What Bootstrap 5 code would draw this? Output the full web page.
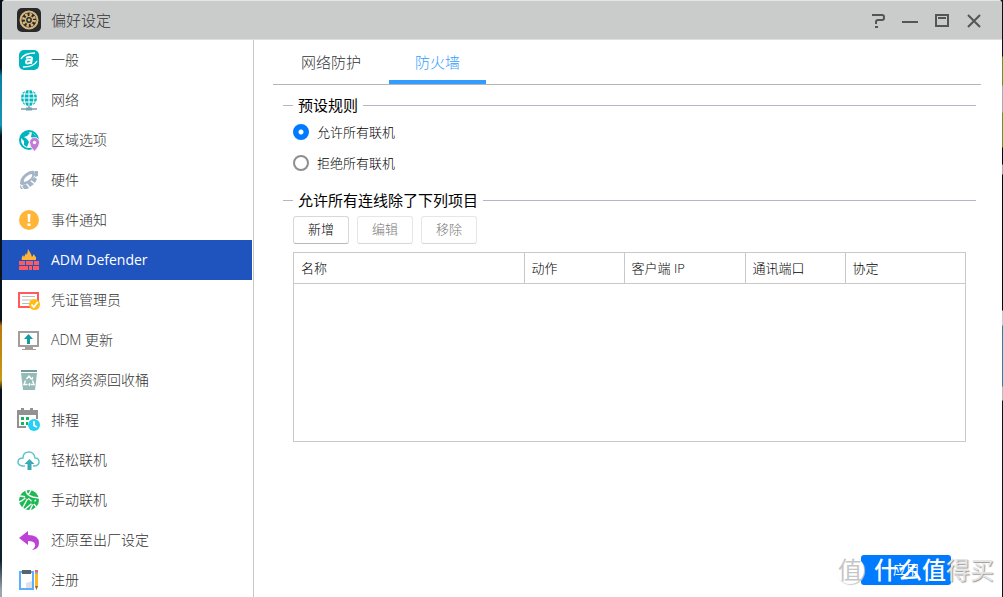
<!DOCTYPE html>
<html lang="zh-CN">
<head>
<meta charset="utf-8">
<meta name="viewport" content="width=device-width, initial-scale=1">
<title>偏好设定</title>
<link href="https://cdn.jsdelivr.net/npm/bootstrap@5.3.0/dist/css/bootstrap.min.css" rel="stylesheet">
<style>
  body {
    font-family: "Open Sans", "Noto Sans CJK SC", sans-serif;
    font-size: 14px;
    font-weight: 300;
    line-height: 20px;
    color: #222;
    background: #07121d;
  }
  .desktop {
    padding: 0 1px 0 2px;
    background:
      linear-gradient(#07121d 68px, #0d7ea0 76px, #1397b8 125px, #07121d 136px, #07121d 320px, #b87912 326px, #c89a10 380px, #07121d 390px, #0d2030 560px, #9aa5ad 590px) left / 2px 100% no-repeat,
      linear-gradient(#07121d 56px, #5c9a12 57px 85px, #aaa 86px 112px, #5c9a12 113px 147px, #050a0e 148px 164px, #aaa 165px 174px, #050a0e 175px 310px, #ccc 311px 325px, #1b8ba5 326px 386px, #bbb 387px 400px, #0b151d 401px) right / 1px 100% no-repeat,
      #07121d;
  }
  .app-window { border-radius: 4px 4px 0 0; background: #fff; }
  .titlebar {
    height: 40px;
    padding: 0 18px 0 14px;
    gap: 9px;
    background: #cacbcb;
    border-top: 1px solid #e4e5e5;
    border-bottom: 1px solid #e0e0e0;
    font-size: 15px;
    color: #333;
  }
  .titlebar button { width: 20px; height: 20px; color: #555; }
  .sidebar { width: 252px; padding-right: 1px; border-right: 1px solid #c8c8c8; }
  .sidebar a {
    height: 40px;
    padding-left: 14px;
    gap: 9px;
    color: #333;
    text-decoration: none;
  }
  .sidebar a.active { background: #1f54bf; color: #fff; font-weight: 400; }
  .sidebar svg, .titlebar svg { flex: none; }
  .content { padding: 0 21px 0 19px; color: #000; }
  .tabs { gap: 2px; padding-left: 2px; border-bottom: 1px solid #b5b5b7; }
  .tabs .nav-link {
    height: 44px;
    padding: 4px 26px 0;
    border: 0;
    border-bottom: 4px solid transparent;
    border-radius: 0;
    background: transparent;
    font-size: 15px;
    color: #333;
  }
  .tabs .nav-link.active { color: #339cff; border-color: #339cff; }
  .panel { padding: 10px 5px 12px 10px; }
  .panel legend { height: 21px; gap: 5px; font-size: 15px; line-height: 21px; font-weight: 400; }
  .panel legend::before, .panel legend::after { content: ""; height: 1px; background: #b4b6c8; }
  .panel legend::before { width: 10px; }
  .panel legend::after { flex: 1; }
  .group-body { padding: 0 10px; font-size: 13px; }
  .option { height: 31px; gap: 8px; }
  .option .form-check-input { width: 16px; height: 16px; border: 2px solid #8e8e8e; box-shadow: none; }
  .option .form-check-input:checked {
    border-color: #007aff;
    background: radial-gradient(circle, #fff 2px, #007aff 3px);
  }
  .toolbar { gap: 8px; padding: 5px 0 8px; }
  .toolbar .btn {
    width: 56px;
    height: 28px;
    padding: 0;
    font-size: 13px;
    font-weight: 300;
    color: #000;
    background: #fff;
    border: 1px solid #d8d8d8;
    border-bottom-color: #b8b8b8;
    border-radius: 3px;
  }
  .toolbar .btn:disabled { color: #777; opacity: 1; border-color: #e6e6e6 #e6e6e6 #d8d8d8; }
  .rules { min-height: 190px; border: 1px solid #c9c9c9; }
  .rules table { table-layout: fixed; border-bottom: 1px solid #c9c9c9; }
  .rules th { height: 30px; padding: 0 7px; font-weight: 300; border-right: 1px solid #c9c9c9; }
  .rules th:last-child { border-right: 0; }
  .col-s { width: 100px; }
  .col-m { width: 121px; }
  .col-l { width: 120px; }
  .actions { padding-right: 25px; }
  .apply {
    width: 90px;
    height: 30px;
    padding: 0;
    background: #007aff;
    color: #fff;
    border: 0;
    border-radius: 3px;
    font-size: 13px;
  }
  .watermark {
    right: 8px;
    bottom: 9px;
    gap: 10px;
    font-size: 24px;
    line-height: 36px;
    font-weight: 500;
    color: #fff;
    pointer-events: none;
  }
  .watermark .seal { width: 28px; height: 28px; line-height: 28px; border-radius: 50%; background: #fff; color: #c6c6c6; box-shadow: 1px 1px 1px #ccc; font-weight: 400; }
  .watermark .tail { color: #e4e4e4; font-weight: 400; text-shadow: 1px 1px 1px #999; }
</style>
</head>
<body>
<div class="desktop vh-100">
<div class="app-window h-100 d-flex flex-column position-relative overflow-hidden">
  <header class="titlebar d-flex align-items-center flex-shrink-0">
    <svg width="26" height="26" viewBox="0 0 26 26" fill="none"><rect x="1" y="1" width="24" height="24" rx="5" fill="#29292b"/><circle cx="13" cy="13" r="8.5" stroke="#d5b77c" stroke-width="2"/><circle cx="13" cy="13" r="5.5" stroke="#d5b77c" stroke-width="3" stroke-dasharray="2.3 2"/><circle cx="13" cy="13" r="3.5" stroke="#d5b77c" stroke-width="1.2"/><circle cx="13" cy="13" r="1.4" fill="#d5b77c"/></svg>
    <span class="me-auto">偏好设定</span>
    <div class="d-flex gap-2">
      <button class="btn p-0 border-0 d-flex me-1" aria-label="帮助"><svg width="20" height="20" viewBox="0 0 20 20" fill="none" stroke="currentColor" stroke-width="2"><path d="M4 5h10q2 0 2 2v1q0 2-2 2h-4q-2 0-2 2v2M7 17h3"/></svg></button>
      <button class="btn p-0 border-0 d-flex me-1" aria-label="最小化"><svg width="20" height="20" viewBox="0 0 20 20" stroke="currentColor" stroke-width="2"><path d="M2 12h16"/></svg></button>
      <button class="btn p-0 border-0 d-flex me-1" aria-label="最大化"><svg width="20" height="20" viewBox="0 0 20 20" fill="none" stroke="currentColor" stroke-width="2"><path d="M4 5h12v11H4zM6 8h8"/></svg></button>
      <button class="btn p-0 border-0 d-flex" aria-label="关闭"><svg width="20" height="20" viewBox="0 0 20 20" stroke="currentColor" stroke-width="2"><path d="M4 5l12 12M16 5L4 17"/></svg></button>
    </div>
  </header>

  <div class="d-flex flex-grow-1 overflow-hidden">
    <nav class="sidebar flex-shrink-0 overflow-hidden">
      <a href="#" class="d-flex align-items-center"><svg width="26" height="26" viewBox="0 0 26 26" fill="none"><rect x="3" y="3" width="20" height="20" rx="5" fill="#00b5bd"/><path d="M10 11q4-2 6 0l-1 6M15 13q-5-1-5 2t5 0" stroke="#fff" stroke-width="2"/><path d="M5 12q3-6 14-6M21 14q-3 6-14 6" stroke="#fff" stroke-width="1.3"/></svg>一般</a>
      <a href="#" class="d-flex align-items-center"><svg width="26" height="26" viewBox="0 0 26 26" fill="none"><circle cx="13" cy="11" r="8" fill="#00b5bd"/><path d="M5 11h16M6 7h14M6 15h14M13 3v16M10 3q-4 8 0 16M16 3q4 8 0 16" stroke="#fff"/><path d="M13 19v2M5 22h16" stroke="#7c9fb2" stroke-width="1.5"/><path d="M10 22h6" stroke="#7c9fb2" stroke-width="3"/></svg>网络</a>
      <a href="#" class="d-flex align-items-center"><svg width="26" height="26" viewBox="0 0 26 26" fill="none"><circle cx="13" cy="13" r="9" stroke="#00b5bd" stroke-width="2"/><path d="M5 8l6-4 3 2-3 3-3 1 3 2 2 3-2 5-3-2v-4l-3-3zM16 5l5 5-3 2-3-2z" fill="#00b5bd"/><path d="M18.500 24.500q-5-5-5-9a5 5 0 0 1 10 0q0 4-5 9" fill="#c37bd8" stroke="#fff" stroke-width=".8"/><circle cx="18.500" cy="15.500" r="1.700" fill="#fff"/></svg>区域选项</a>
      <a href="#" class="d-flex align-items-center"><svg width="26" height="26" viewBox="0 0 26 26"><path d="M4 17Q4 11 9 7T18 4Q20 6 17 11T10 17Q6 19 4 17z" fill="#a3b4c7"/><path d="M8 15q-1-2 2-5t6-3q1 2-2 5t-6 3z" fill="#fff"/><path d="M19 4h3v5l-3 1-1-2zM18 10l3 2-2 4-4-3zM14 14l4 3-4 3-3-4zM10 17l3 4-2 1H8l-2-3zM4 18l3 4H5l-1-2z" fill="#a3b4c7"/></svg>硬件</a>
      <a href="#" class="d-flex align-items-center"><svg width="26" height="26" viewBox="0 0 26 26"><circle cx="13" cy="13" r="10" fill="#ffb638"/><path d="M11.500 7h3l-.5 8h-2zM11.500 16.500h3v2.500h-3z" fill="#fff"/></svg>事件通知</a>
      <a href="#" class="d-flex align-items-center active" aria-current="page"><svg width="26" height="26" viewBox="0 0 26 26"><path d="M6 13q-1-2 1-5l1 2 2-4 1 2 1-6 3 5 1 3 2-3q1 3 2 3v3z" fill="#ffb638"/><path d="M3 14h6v4H3zm7 0h7v4h-7zm8 0h5v4h-5zM3 19h9v4H3zm10 0h3v4h-3zm4 0h6v4h-6z" fill="#ff5a5f"/></svg>ADM Defender</a>
      <a href="#" class="d-flex align-items-center"><svg width="26" height="26" viewBox="0 0 26 26" fill="none"><path d="M3 6h19v14H3z" stroke="#ff5a5f" stroke-width="2"/><path d="M6 9.500h13M6 13h11M6 16.500h9" stroke="#bbb"/><circle cx="18.500" cy="17.500" r="5.500" fill="#ffbd16"/><path d="M15.500 17.500l2.300 2.500 4-5" stroke="#fff" stroke-width="1.800"/></svg>凭证管理员</a>
      <a href="#" class="d-flex align-items-center"><svg width="26" height="26" viewBox="0 0 26 26" fill="none"><path d="M3 5h19v14H3z" stroke="#a39e99" stroke-width="2"/><path d="M9 20h8v2h3v1H6v-1h3z" fill="#a39e99"/><path d="M12.500 7l4.500 5h-3v5h-3v-5H8z" fill="#129ca3"/></svg>ADM 更新</a>
      <a href="#" class="d-flex align-items-center"><svg width="26" height="26" viewBox="0 0 26 26" fill="none"><path d="M5 3h16v2H5z" fill="#719c99"/><path d="M5 6h16l-2 17H7z" fill="#94bbb8"/><path d="M10.500 12l2.500-3 2.500 3M9.500 13.500L8 17.500h3.500M16.500 13.500l1.500 4h-3.500" stroke="#fff" stroke-width="1.400"/><path d="M14 12.500h3v-3zM14 15.500v4l-2-2z" fill="#fff"/></svg>网络资源回收桶</a>
      <a href="#" class="d-flex align-items-center"><svg width="26" height="26" viewBox="0 0 26 26" fill="none"><path d="M1 3h4V1h3v2h6V1h3v2h5v9h-2V8H3v11h7v2H1z" fill="#929292"/><path d="M5 10h3v3H5zm5 0h3v3h-3zm-5 5h3v3H5zm5 0h2v3h-2z" fill="#12b65c"/><circle cx="18" cy="18" r="6" fill="#25d0f5"/><path d="M18 14v4.500l3 1.500" stroke="#fff" stroke-width="1.800"/></svg>排程</a>
      <a href="#" class="d-flex align-items-center"><svg width="26" height="26" viewBox="0 0 26 26" fill="none"><path d="M9 19H6q-4-1-4-4 0-4 5-4 0-6 6-6 5 0 6 6 4 0 4 4 0 3-4 4h-2" stroke="#5fc5ca" stroke-width="1.500"/><path d="M13.500 12l5 5h-3v6h-4v-6h-3z" fill="#38abb3"/></svg>轻松联机</a>
      <a href="#" class="d-flex align-items-center"><svg width="26" height="26" viewBox="0 0 26 26" fill="none"><circle cx="13" cy="13" r="10" fill="#1db954"/><path d="M3 9q10-1 18 12M10 3q0 7 13 8M3 15q8-3 12-12M6 22l6-11M8 23l12-10M17 17l-3 6" stroke="#fff" stroke-width="1.400"/><circle cx="11" cy="10" r="2" fill="#1db954"/><circle cx="17" cy="15.500" r="2" fill="#1db954"/></svg>手动联机</a>
      <a href="#" class="d-flex align-items-center"><svg width="26" height="26" viewBox="0 0 26 26"><path d="M3 11l9-7v4q11 0 11 8 0 6-7 7 4-3 3-6-1-3-7-3v4z" fill="#bd43d6"/></svg>还原至出厂设定</a>
      <a href="#" class="d-flex align-items-center"><svg width="26" height="26" viewBox="0 0 26 26" fill="none"><path d="M4 5h13v17H4z" stroke="#5caeff" stroke-width="2"/><path d="M6 3h9v4H6z" fill="#56646e"/><path d="M10 16l6-2v7h-6z" fill="#dce3e8"/><path d="M19 6h3v13l-1.500 4-1.500-4z" fill="#ffb81c"/><path d="M19 3h3v2h-3z" fill="#f05c69"/><path d="M19 5h3v2h-3z" fill="#a0a6ad"/><path d="M19 19h3l-1.500 4z" fill="#9b6439"/></svg>注册</a>
    </nav>

    <main class="content flex-grow-1 d-flex flex-column">
      <div class="tabs nav" role="tablist">
        <button class="nav-link" role="tab" aria-selected="false">网络防护</button>
        <button class="nav-link active" role="tab" aria-selected="true">防火墙</button>
      </div>
      <div class="panel flex-grow-1 d-flex flex-column">
        <fieldset>
          <legend class="d-flex align-items-center mb-0">预设规则</legend>
          <div class="group-body">
            <div class="option d-flex align-items-center">
              <input class="form-check-input m-0" type="radio" name="policy" id="allow" checked>
              <label for="allow">允许所有联机</label>
            </div>
            <div class="option d-flex align-items-center">
              <input class="form-check-input m-0" type="radio" name="policy" id="deny">
              <label for="deny">拒绝所有联机</label>
            </div>
          </div>
        </fieldset>
        <fieldset class="pt-2 mt-1">
          <legend class="d-flex align-items-center mb-0">允许所有连线除了下列项目</legend>
          <div class="group-body">
            <div class="toolbar d-flex">
              <button class="btn">新增</button>
              <button class="btn" disabled>编辑</button>
              <button class="btn" disabled>移除</button>
            </div>
            <div class="rules">
              <table class="w-100">
                <colgroup><col><col class="col-s"><col class="col-m"><col class="col-s"><col class="col-l"></colgroup>
                <thead><tr><th scope="col">名称</th><th scope="col">动作</th><th scope="col">客户端 IP</th><th scope="col">通讯端口</th><th scope="col">协定</th></tr></thead>
              </table>
            </div>
          </div>
        </fieldset>
        <div class="actions mt-auto d-flex justify-content-end">
          <button class="apply btn">应用</button>
        </div>
      </div>
    </main>
  </div>

  <div class="watermark position-absolute d-flex align-items-center">
    <span class="seal text-center">值</span>
    <span>什么值<span class="tail">得买</span></span>
  </div>
</div>
</div>
<script src="https://cdn.jsdelivr.net/npm/bootstrap@5.3.0/dist/js/bootstrap.bundle.min.js"></script>
</body>
</html>
